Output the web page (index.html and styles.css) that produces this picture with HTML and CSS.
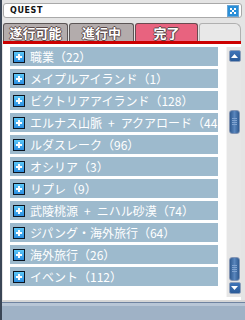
FILE: index.html
```html
<!DOCTYPE html>
<html lang="ja">
<head>
<meta charset="utf-8">
<link rel="stylesheet" href="styles.css">
</head>
<body>
<div class="window">
  <div class="titlebar">
    <span class="title">QUEST</span>
    <span class="close">
      <svg width="10" height="10" viewBox="0 0 10 10">
        <rect x="0" y="0" width="10" height="10" fill="#2a8fd8"/>
        <rect x="2" y="2" width="2" height="2" fill="#fff"/>
        <rect x="6" y="2" width="2" height="2" fill="#fff"/>
        <rect x="4" y="4" width="2" height="2" fill="#fff"/>
        <rect x="2" y="6" width="2" height="2" fill="#fff"/>
        <rect x="6" y="6" width="2" height="2" fill="#fff"/>
      </svg>
    </span>
  </div>
  <div class="tabs">
    <div class="tab gray">遂行可能</div>
    <div class="tab gray">進行中</div>
    <div class="tab pink">完了</div>
    <div class="tab empty"></div>
  </div>
  <div class="redline"></div>
  <div class="content">
    <ul class="list">
      <li class="row"><span class="plus"></span><span class="label">職業（22）</span></li>
      <li class="row"><span class="plus"></span><span class="label">メイプルアイランド（1）</span></li>
      <li class="row"><span class="plus"></span><span class="label">ビクトリアアイランド（128）</span></li>
      <li class="row"><span class="plus"></span><span class="label">エルナス山脈&ensp;+&ensp;アクアロード（44）</span></li>
      <li class="row"><span class="plus"></span><span class="label">ルダスレーク（96）</span></li>
      <li class="row"><span class="plus"></span><span class="label">オシリア（3）</span></li>
      <li class="row"><span class="plus"></span><span class="label">リプレ（9）</span></li>
      <li class="row"><span class="plus"></span><span class="label">武陵桃源&ensp;+&ensp;ニハル砂漠（74）</span></li>
      <li class="row"><span class="plus"></span><span class="label">ジパング・海外旅行（64）</span></li>
      <li class="row"><span class="plus"></span><span class="label">海外旅行（26）</span></li>
      <li class="row"><span class="plus"></span><span class="label">イベント（112）</span></li>
    </ul>
    <div class="scrollbar">
      <span class="arrow up"><svg width="7" height="5" viewBox="0 0 7 5"><polygon points="3.5,0 7,4 0,4" fill="#fff"/></svg></span>
      <span class="thumb"><span class="grip"></span></span>
      <span class="spacer"></span>
      <span class="thumb"><span class="grip"></span></span>
      <span class="arrow down"><svg width="7" height="5" viewBox="0 0 7 5"><polygon points="0,0 7,0 3.5,4" fill="#fff"/></svg></span>
    </div>
  </div>
  <div class="footer">
    <div class="f1"></div>
    <div class="f2"></div>
    <div class="f3"></div>
  </div>
</div>
</body>
</html>
```

FILE: styles.css
```css
* { box-sizing: border-box; }
html, body { margin: 0; padding: 0; }
body { width: 245px; height: 320px; overflow: hidden; background: #2e3a48; }

.window {
  width: 245px;
  height: 320px;
  background: #e4e4e4;
  border-left: 2px solid #3a4656;
  display: flex;
  flex-direction: column;
  font-family: "Noto Sans CJK JP", "DejaVu Sans", sans-serif;
}

.titlebar {
  margin: 3px 3px 0 1px;
  height: 15px;
  background: #fff;
  border: 1px solid #a9a9a9;
  border-radius: 3px;
  display: flex;
  align-items: center;
  justify-content: space-between;
  padding: 0 2px 0 6px;
}
.title {
  font-family: "DejaVu Sans", sans-serif;
  font-size: 8px;
  font-weight: bold;
  letter-spacing: 0.6px;
  color: #111;
}
.close {
  width: 12px;
  height: 12px;
  border: 1px solid #6aa6d6;
  background: #2a8fd8;
  display: flex;
}
.close svg { display: block; }

.tabs {
  display: flex;
  margin: 5px 4px 0 1px;
  height: 18px;
  gap: 1px;
}
.tab {
  height: 18px;
  border: 1px solid #5c5656;
  border-bottom: none;
  border-radius: 3px 3px 0 0;
  color: #fff;
  font-size: 13px;
  font-weight: bold;
  line-height: 17px;
  text-align: center;
  text-shadow: 1px 0 #5a4848, -1px 0 #5a4848, 0 1px #5a4848, 0 -1px #5a4848;
}
.tab.gray { width: 65px; background: #b3acac; }
.tab.pink { width: 63px; background: #e8637f; border-color: #6a4a50; }
.tab.empty { flex: 1; background: #e8e8e8; border-color: #b0b0b0; border-radius: 3px 6px 0 0; }

.redline {
  height: 3px;
  margin: 0 4px 0 1px;
  background: #cc0000;
}

.content {
  height: 256px;
  margin: 0 4px 0 1px;
  background: #fff;
  display: flex;
  justify-content: space-between;
}

.list {
  list-style: none;
  margin: 0;
  padding: 3px 0 0 7px;
  display: flex;
  flex-direction: column;
  gap: 3px;
}
.row {
  width: 208px;
  height: 19px;
  background: #9dbacd;
  display: flex;
  align-items: center;
  overflow: hidden;
  white-space: nowrap;
}
.plus {
  flex: none;
  width: 12px;
  height: 12px;
  margin: 0 5px 0 3px;
  border: 1px solid #0a1420;
  background: linear-gradient(#5cc8f8, #2b8de0);
  position: relative;
}
.plus::before, .plus::after {
  content: "";
  position: absolute;
  background: #fff;
}
.plus::before { left: 2px; top: 4px; width: 6px; height: 2px; }
.plus::after { left: 4px; top: 2px; width: 2px; height: 6px; }
.label {
  color: #fff;
  font-size: 12px;
  line-height: 19px;
}

.scrollbar {
  width: 15px;
  margin-top: 3px;
  height: 250px;
  background: #e6e6e6;
  border-left: 1px solid #f4f4f4;
  display: flex;
  flex-direction: column;
  align-items: center;
  padding: 3px 0 3px 1px;
}
.arrow {
  width: 12px;
  height: 12px;
  border: 1px solid #8ea0bc;
  border-radius: 2px;
  background: linear-gradient(#3f74b8, #2a5a98);
  display: flex;
  align-items: center;
  justify-content: center;
  flex: none;
}
.thumb {
  width: 11px;
  height: 24px;
  margin-top: 48px;
  border: 1px solid #8596b4;
  border-radius: 3px;
  background: linear-gradient(90deg, #2f5a90, #5a86bd 50%, #2f5a90);
  display: flex;
  align-items: center;
  justify-content: center;
  flex: none;
}
.spacer { flex: 1; }
.thumb + .arrow, .spacer + .thumb { margin-top: 0; }
.spacer + .thumb { margin-bottom: 1px; }
.grip {
  width: 5px;
  height: 8px;
  background: repeating-linear-gradient(#7fa2cf 0 1px, transparent 1px 2px);
}

.footer {
  flex: 1;
  display: flex;
  flex-direction: column;
}
.f1 { height: 2px; background: #d6d6d6; }
.f2 { height: 1px; background: #6f83a0; }
.f3 { flex: 1; background: linear-gradient(#b8c6d6 0 3px, #9fb2c6 3px); }
```
